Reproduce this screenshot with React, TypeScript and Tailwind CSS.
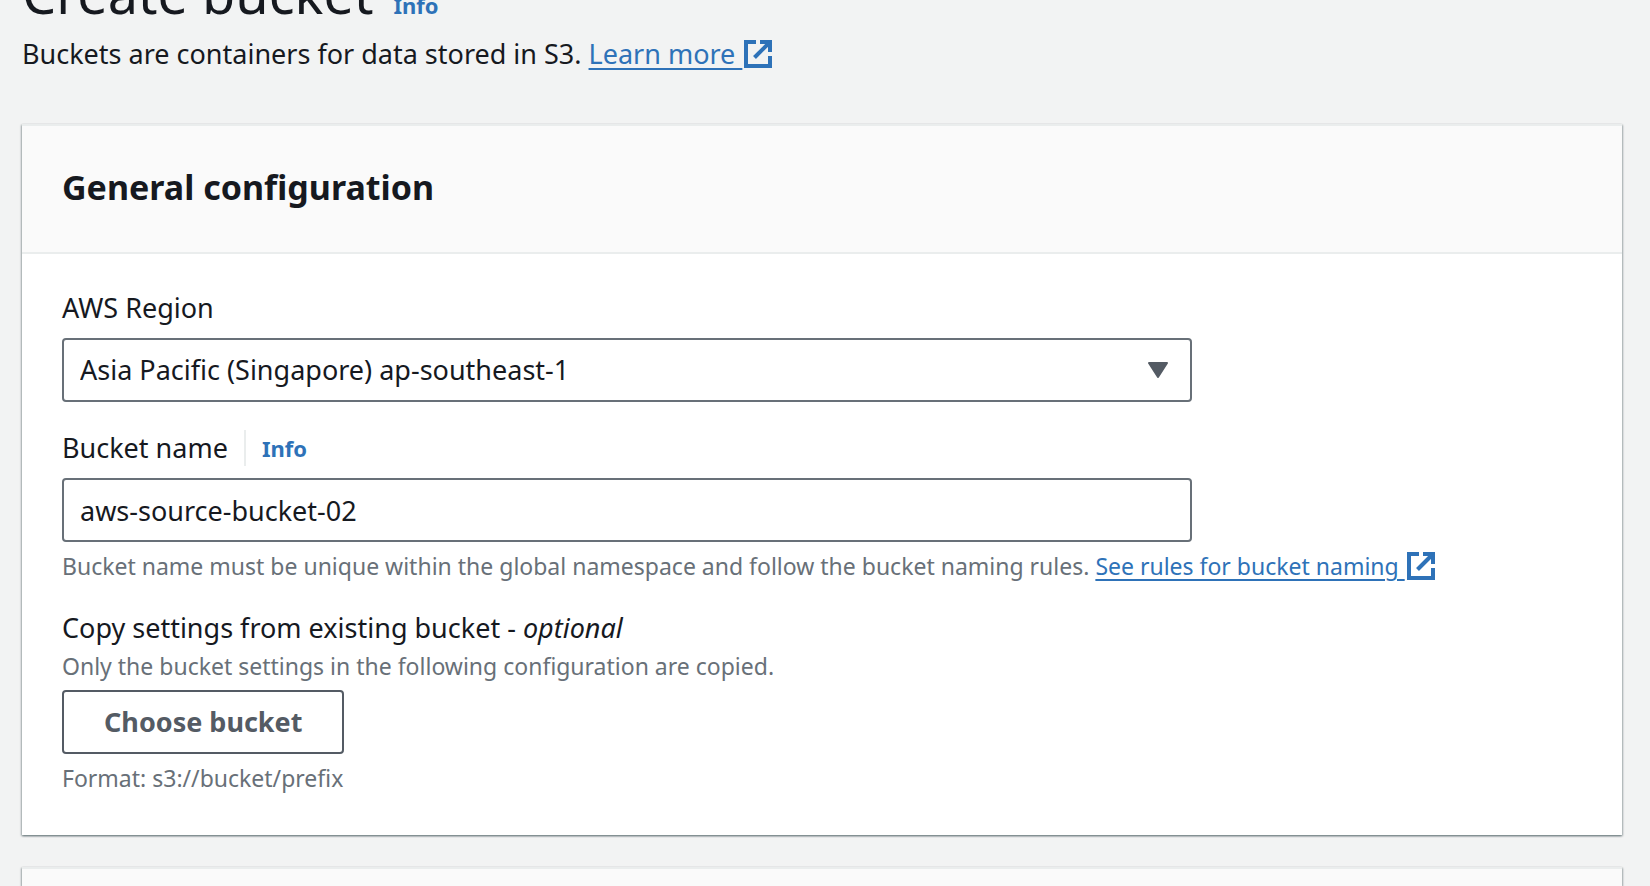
import React from "react";

function ExternalIcon() {
  return (
    <svg className="ml-0.5 h-7 w-7 shrink-0" viewBox="0 0 28 28" fill="none" stroke="currentColor" strokeWidth="4" aria-hidden="true">
      <path d="M12 2H2V26H26V16" />
      <path d="M16 2H26V12" />
      <path d="M26 2L10.500 17.500" />
    </svg>
  );
}

function ExternalLink({ children }: { children: string }) {
  return (
    <a href="#" className="inline-flex items-center align-top text-[#2e72b8]">
      <span className="whitespace-pre underline decoration-2 underline-offset-4">{children + " "}</span>
      <ExternalIcon />
    </a>
  );
}

const card = "border-t-2 border-[#eaeded] shadow-[0_1px_2px_0_rgba(0,28,36,0.4),1px_1px_2px_0_rgba(0,28,36,0.2),-1px_1px_2px_0_rgba(0,28,36,0.2)]";
const label = "text-[27px] leading-[44px]";
const hint = "text-[23px] leading-8 text-[#687078]";
const field = "h-16 w-full rounded-sm border-2 border-[#687078] bg-white px-4 text-[27px] leading-[44px] text-[#16191f]";

export default function App() {
  return (
    <main className="flex min-h-screen flex-col overflow-hidden bg-[#f2f3f3] pr-7 pl-[22px] font-['Noto_Sans','Open_Sans',sans-serif] text-[#16191f]">
      <header className="-mt-[46px]">
        <div className="flex items-baseline gap-5">
          <h1 className="text-[54px] leading-[78px]">Create bucket</h1>
          <a href="#" className="text-[22px] font-bold text-[#2e72b8]">Info</a>
        </div>
        <p className={label}>
          Buckets are containers for data stored in S3. <ExternalLink>Learn more</ExternalLink>
        </p>
      </header>

      <section className={`mt-12 bg-white ${card}`}>
        <div className="border-b-2 border-[#eaeded] bg-[#fafafa] px-10 pt-[34px] pb-[38px]">
          <h2 className="text-[34px] leading-[54px] font-bold">General configuration</h2>
        </div>
        <form className="flex flex-col gap-6 px-10 pt-8 pb-[41px]">
          <div className="flex max-w-[1130px] flex-col gap-2">
            <label htmlFor="region" className={label}>AWS Region</label>
            <div className="relative">
              <select id="region" className={`appearance-none ${field}`}>
                <option>Asia Pacific (Singapore) ap-southeast-1</option>
              </select>
              <svg className="pointer-events-none absolute top-6 right-6 h-4 w-5 text-[#545b64]" viewBox="0 0 20 16" fill="currentColor" stroke="currentColor" strokeWidth="2" strokeLinejoin="round" aria-hidden="true">
                <path d="M1 1H19L10 15Z" />
              </svg>
            </div>
          </div>

          <div className="flex flex-col gap-2">
            <div className="flex items-center">
              <label htmlFor="name" className={label}>Bucket name</label>
              <a href="#" className="ml-4 border-l-2 border-[#eaeded] pl-4 text-[22px] leading-9 font-bold text-[#2e72b8]">Info</a>
            </div>
            <input id="name" type="text" defaultValue="aws-source-bucket-02" className={`max-w-[1130px] ${field}`} />
            <p className={hint}>
              Bucket name must be unique within the global namespace and follow the bucket naming rules. <ExternalLink>See rules for bucket naming</ExternalLink>
            </p>
          </div>

          <div className="flex flex-col items-start gap-2">
            <div>
              <h3 className={label}>
                Copy settings from existing bucket - <i>optional</i>
              </h3>
              <p className={hint}>Only the bucket settings in the following configuration are copied.</p>
            </div>
            <button type="button" className="h-16 rounded-sm border-2 border-[#545b64] bg-white px-10 text-[27px] font-bold text-[#545b64]">
              Choose bucket
            </button>
            <p className={hint}>Format: s3://bucket/prefix</p>
          </div>
        </form>
      </section>

      <section className={`mt-8 grow bg-[#fafafa] ${card}`} />
    </main>
  );
}
